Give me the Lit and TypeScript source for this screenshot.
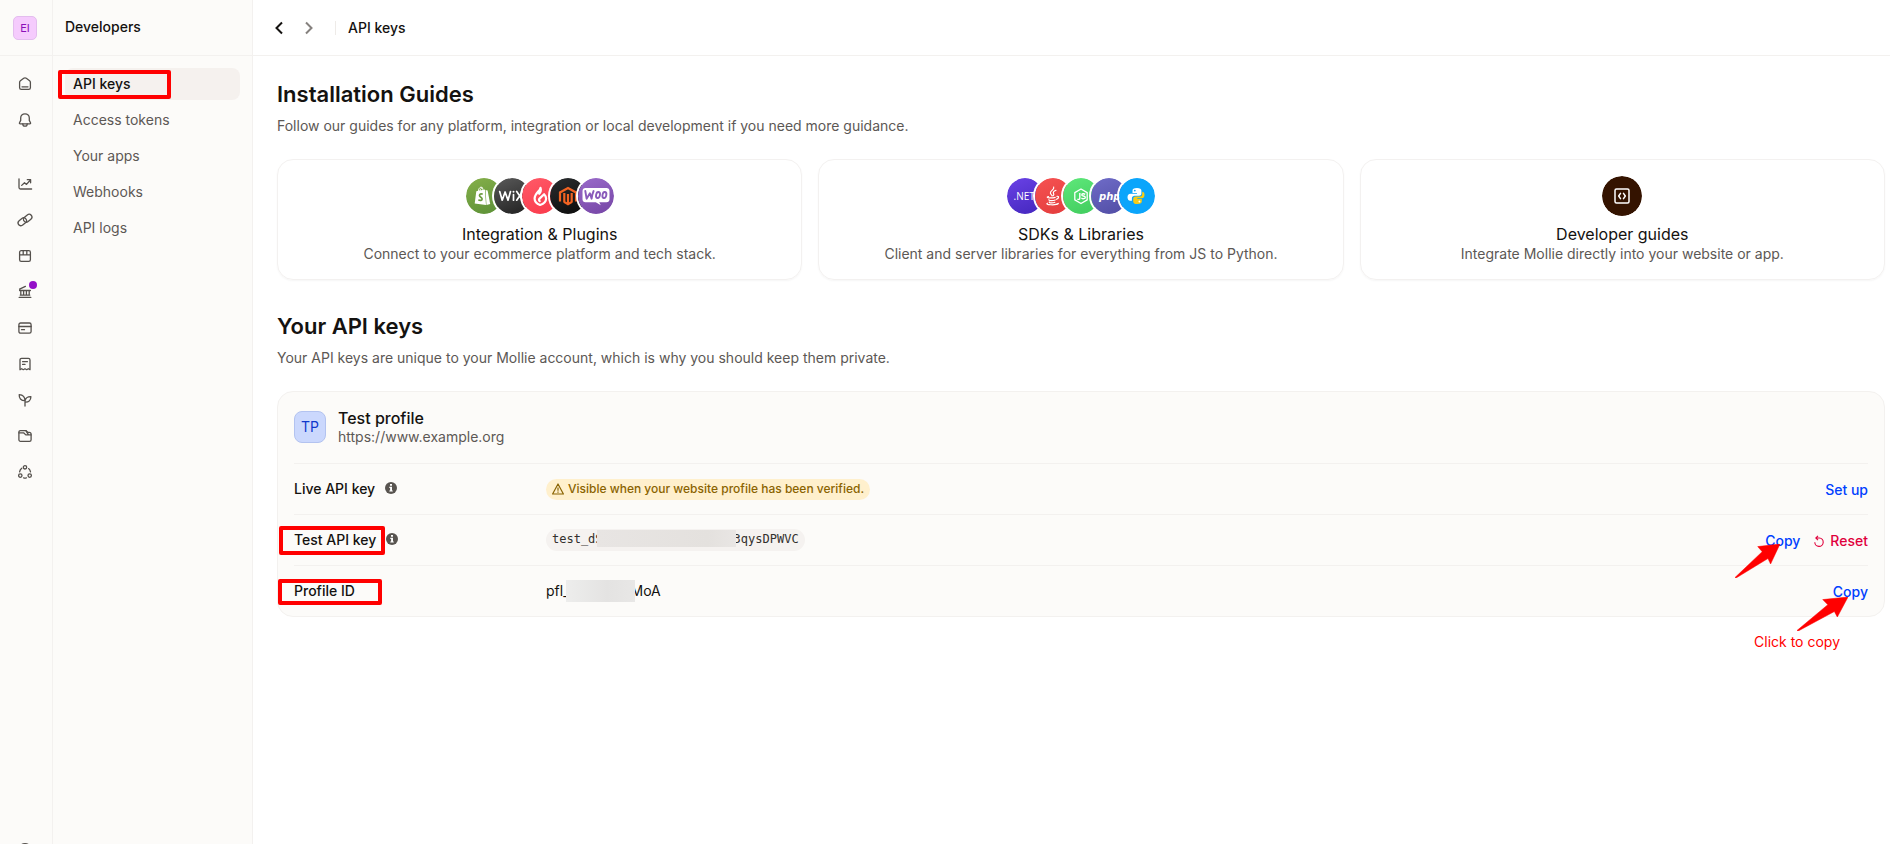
import { LitElement, html, svg, css, nothing, TemplateResult } from "lit";
import { customElement } from "lit/decorators.js";
import { classMap } from "lit/directives/class-map.js";

const railIcons: Record<string, TemplateResult> = {
  Home: svg`<path d="M8 1.9c-.5 0-.9.1-1.3.4L3.4 4.7c-.5.4-.8.9-.8 1.5v5.500c0 .9.7 1.700 1.700 1.700h7.400c1 0 1.700-.8 1.700-1.700V6.200c0-.6-.3-1.100-.8-1.500L9.300 2.300c-.4-.3-.8-.4-1.300-.4z"/><path d="M5 10.800h6"/>`,
  Notifications: svg`<path d="M8 1.800c-2.500 0-4.300 1.900-4.300 4.300v2.300L2.500 10.700c-.3.6 0 1.200.7 1.200h9.600c.7 0 1-.6.7-1.200l-1.200-2.300V6.100c0-2.400-1.800-4.300-4.300-4.300z"/><path d="M5.800 12c0 1.300 1 2.200 2.200 2.200s2.200-.9 2.200-2.200"/>`,
  Statistics: svg`<path d="M2 2.800v8.700c0 .9.600 1.500 1.500 1.500H14.600"/><path d="M4.700 9.400l2.800-2.700 2 1.700L13.400 4"/><path d="M10.300 3.700h3.300v3.100"/>`,
  "Payment links": svg`<rect x="0.700" y="7" width="9.200" height="5.600" rx="2.800" transform="rotate(-40 5.300 9.800)"/><rect x="6.100" y="3.400" width="9.200" height="5.600" rx="2.800" transform="rotate(-40 10.700 6.200)"/>`,
  Shop: svg`<rect x="2.600" y="2.700" width="10.800" height="10.700" rx="1.600"/><path d="M2.600 6.900h10.800M6.200 2.700v4.200M9.800 2.700v4.200"/>`,
  Balances: svg`<path d="M2.600 6.500h10.800M2.600 5.200L8.400 2.400M3.800 6.500v4.500M6.600 6.500v4.500M9.400 6.500v4.500M12.200 6.500v4.500M3.200 11.100h9.600M2.200 13.400h11.600"/>`,
  Cards: svg`<rect x="1.900" y="3" width="12.200" height="10.200" rx="1.700"/><path d="M1.900 6.500h12.200M4.500 9.700h3"/>`,
  Invoices: svg`<path d="M3 13.700V3.900c0-.9.700-1.600 1.600-1.600h6.800c.9 0 1.600.7 1.600 1.600v9.800l-1.700-1-1.600 1-1.700-1-1.700 1-1.600-1z"/><path d="M5.600 5.700h4.800M5.600 8.400h2.400"/>`,
  Capital: svg`<path d="M8 14V8.700M8 8.700C8 5.100 6 2.900 2.200 2.600c-.2 3.500 1.600 6.100 5.800 6.100zM8 10.200c3.900.2 5.800-1.900 5.900-5.500-3.200-.1-5.200 1.200-5.800 4"/>`,
  Wallet: svg`<path d="M1.900 11.700V4.200c0-.9.700-1.600 1.600-1.600h5.600l1.600 1.700h1.500c1.100 0 1.900.8 1.900 1.900v5.500c0 .9-.7 1.600-1.600 1.600h-9c-.9 0-1.600-.7-1.600-1.600z"/><path d="M1.900 4.800h4.700l2.200 2.100h5.200M9 2.800l2.400 3.900"/>`,
  Connect: svg`<circle cx="8" cy="3.300" r="1.700"/><circle cx="3.300" cy="11.600" r="1.700"/><circle cx="12.700" cy="11.600" r="1.700"/><path d="M4.700 4.300C3.500 5.200 2.800 6.500 2.600 7.900M11.600 4.600c1.100.9 1.700 2 1.900 3.300M6.600 13.800c.9.3 1.900.3 2.800 0"/>`,
  Settings: svg`<circle cx="8" cy="8" r="6.400"/><path d="M8 5v6"/>`,
};

const railGroups = [
  ["Home", "Notifications"],
  ["Statistics", "Payment links", "Shop", "Balances", "Cards", "Invoices", "Capital", "Wallet", "Connect"],
];

const menu = ["API keys", "Access tokens", "Your apps", "Webhooks", "API logs"];

const logo = (bg: string, body: TemplateResult) => html`
  <svg class="logo" viewBox="0 0 36 36" aria-hidden="true">
    <circle cx="18" cy="18" r="18" fill=${bg} />${body}
  </svg>`;

const gradient = (id: string, from: string, to: string) => svg`
  <defs><linearGradient id=${id} x1="0" y1="0" x2="0.400" y2="1">
    <stop offset="0" stop-color=${from}/><stop offset="1" stop-color=${to}/>
  </linearGradient></defs>`;

const plugins = [
  logo("url(#shop)", svg`${gradient("shop", "#86b04a", "#62953a")}
    <path fill="#fff" d="M10.300 13.200l8.600-1.700 1.100 15.600-11.300-1.700zM19.600 12l2 .6 2.600 13.400-3.700 1z"/>
    <path fill="none" stroke="#fff" stroke-width="1" d="M12.200 13.500c.3-2.600 1.600-4.300 2.800-4.400 1.400 0 2 1.600 2 3.600M14 13c.2-2 1.500-3.300 2.500-3.200"/>
    <path fill="none" stroke="#6b9b3e" stroke-width="1.700" d="M16.700 16.200c-1.600-.8-3.200-.2-3.200 1.200 0 1.900 2.600 1.700 2.600 3.500 0 1.600-1.900 1.900-3.700.8"/>`),
  logo("url(#wix)", svg`${gradient("wix", "#5a5a5a", "#2a2a2a")}
    <path fill="none" stroke="#fff" stroke-width="1.700" stroke-linejoin="round" stroke-linecap="round" d="M5.700 13.500l2.500 8.700 2.900-8.200 2.900 8.200 2.500-8.700M19.500 16.500v5.700M22.700 13.500l6 8.700M28.700 13.500l-6 8.700"/><circle cx="19.500" cy="13.700" r="1" fill="#fff"/>`),
  logo("url(#light)", svg`${gradient("light", "#ff5a68", "#fb3f50")}
    <path fill="none" stroke="#fff" stroke-width="2.200" stroke-linejoin="round" stroke-linecap="round" d="M18.500 9.800c-.4 3.200-5.900 5.800-5.900 10.600 0 3.400 2.500 5.500 5.500 6.600 3.200-1 6-3.100 6-6.400 0-1.900-.8-3.200-2-4.400l-4.300 4.200c-1 1-1 1.900-.1 2.800M18.500 9.800c.9 2.800.2 4.400-1.300 6"/>`),
  logo("url(#magento)", svg`${gradient("magento", "#2a2d2f", "#111")}
    <path fill="none" stroke="#f26322" stroke-width="2.200" d="M10 23.500V14.500l8-4.500 8 4.500v9M14.300 15v9.300M21.700 15v9.300M14 23.900l4 2.400 4-2.400M18 16v10"/>`),
  logo("url(#woo)", svg`${gradient("woo", "#9a6bca", "#7b4bab")}
    <path fill="#fff" d="M7.500 10h21c1.800 0 3 1.200 3 3v8.300c0 1.800-1.200 3-3 3h-7.300l1.600 3-5-3H7.500c-1.800 0-3-1.200-3-3V13c0-1.800 1.200-3 3-3z"/>
    <path fill="none" stroke="#8a5bbb" stroke-width="1.900" stroke-linejoin="round" stroke-linecap="round" d="M7.300 13l1.300 7.700 3.300-5.500 1.700 5.500c.3-3 1-5.500 2-7.700"/>
    <ellipse cx="20" cy="17" rx="1.900" ry="3.100" transform="rotate(12 20 17)" fill="none" stroke="#8a5bbb" stroke-width="1.900"/><ellipse cx="26.400" cy="17" rx="1.900" ry="3.100" transform="rotate(12 26.400 17)" fill="none" stroke="#8a5bbb" stroke-width="1.900"/>`),
];

const sdks = [
  logo("url(#net)", svg`${gradient("net", "#6a42e6", "#4a2bc4")}<text class="net" x="6.500" y="22">.NET</text>`),
  logo("url(#java)", svg`${gradient("java", "#f65252", "#e64040")}
    <path fill="none" stroke="#fff" stroke-width="1.200" stroke-linecap="round" d="M18.700 9c1 2.800-3.900 3.800-3.300 6.200.2 1 1.500 1.700 1.800 2.800M21 12.300c-2.300.9-3.200 1.900-2.400 3.200.5.800.3 1.400-.3 2M13.500 18.500c-2.200.6-1.200 1.300 1 1.400 2 .1 4.200-.1 5.700-.5M22 18.300c2.200-.3 2 2-.6 3M14 21.700c-.8 1 3.800 1.300 6.200.3M14.300 24c-.5 1 3.600 1.200 5.500.3M12.500 25.200c-3.600 1.500 8.500 2.500 10.800.3"/>`),
  logo("url(#node)", svg`${gradient("node", "#5ee87a", "#45d062")}
    <path fill="none" stroke="#fff" stroke-width="1.300" stroke-linejoin="round" d="M18 11l6.200 3.600v7.300L18 25.500l-6.200-3.600v-7.300z"/>
    <path fill="none" stroke="#fff" stroke-width="1.400" d="M16.800 15v5.200c0 1.300-1.300 1.500-2.400.8M22.200 16.300c-1.400-.9-3.400-.6-3.400.6 0 1.500 3.500.7 3.500 2.500 0 1.500-2.500 1.700-3.900.6"/>`),
  logo("url(#php)", svg`${gradient("php", "#6f6cc8", "#5652aa")}<text class="php" x="8" y="21.500">php</text>`),
  logo("#0ba5fb", svg`
    <path fill="#fff" d="M18 10c-3.300 0-4.500 1-4.500 2.500V15H18v.8h-6.500c-2 0-3 1.500-3 3.400s1 3.500 2.700 3.500h1.700v-2.200c0-1.700 1.300-2.700 2.800-2.700h4.400c1.300 0 2.300-1 2.300-2.300v-3C22.400 11 21 10 18 10z"/>
    <path fill="#f9cb14" d="M18.300 26c3.300 0 4.500-1 4.500-2.500V21h-4.500v-.8h4.500c2 0 2.700-1.500 2.700-3.400s-.9-3-2.300-3v2.100c0 1.700-1.200 2.700-2.700 2.700h-4c-1.300 0-2.300 1-2.300 2.300v2.500c0 1.600 1.400 2.600 4.100 2.600z"/>
    <circle cx="15.800" cy="12.600" r="0.900" fill="#0ba5fb"/><circle cx="20.400" cy="23.500" r="0.900" fill="#fff"/>`),
];

const devGuide = html`
  <svg class="logo large" viewBox="0 0 40 40" aria-hidden="true">
    <circle cx="20" cy="20" r="20" fill="#341300" />
    <g fill="none" stroke="#fff" stroke-width="1.500" stroke-linecap="round" stroke-linejoin="round">
      <rect x="13" y="13" width="14" height="14" rx="1.500" /><path d="M18.500 17.300l-1.800 2.700 1.800 2.700M21.500 17.300l1.800 2.700-1.800 2.700" />
    </g>
  </svg>`;

const guides = [
  { title: "Integration & Plugins", text: "Connect to your ecommerce platform and tech stack.", logos: plugins },
  { title: "SDKs & Libraries", text: "Client and server libraries for everything from JS to Python.", logos: sdks },
  { title: "Developer guides", text: "Integrate Mollie directly into your website or app.", logos: [devGuide] },
];

const infoIcon = html`
  <button class="info" aria-label="More information">
    <svg viewBox="0 0 12 12" aria-hidden="true"><circle cx="6" cy="6" r="6" fill="#585450" />
      <path d="M5 2.100h2v1.600H5zM4.300 4.800H7v3.600h.8v1.200H4.300V8.400h.8V6h-.8z" fill="#fff" /></svg>
  </button>`;

const arrow = html`
  <svg class="arrow" viewBox="0 0 43 34" preserveAspectRatio="none" aria-hidden="true">
    <path d="M0 33.500L26 7.700 21.700 2.600 43 0 34 20 31.500 14.500 1 34z" fill="#f00" stroke="#f00" stroke-width="0.500" />
  </svg>`;

@customElement("app-root")
export class AppRoot extends LitElement {
  static styles = css`
    :host {
      display: grid;
      grid-template-columns: 53px 200px minmax(0, 1fr);
      min-height: 100vh;
      box-sizing: border-box;
      background: #fff;
      color: #141210;
      font: 400 14px/20px Inter, sans-serif;
    }
    * { box-sizing: border-box; }
    h1, h2, h3, p, ul, dl, dd, dt { margin: 0; padding: 0; font: inherit; }
    ul { list-style: none; }
    a { color: inherit; text-decoration: none; }
    button { font: inherit; color: inherit; background: none; border: 0; padding: 0; cursor: pointer; }
    svg { display: block; }

    .rail, .side { background: #fcfbf9; border-right: 1px solid #f3f1ef; }
    .rail { display: flex; flex-direction: column; height: 100vh; overflow: hidden; }
    .bar { display: flex; align-items: center; height: 56px; border-bottom: 1px solid #f3f1ef; flex: none; }
    .rail .bar { padding: 1px 0 0 13px; }
    .account {
      width: 24px; height: 24px; border-radius: 5px; border: 1px solid #e3bdee;
      background: #f5cbfd; color: #8c0fb8; font-size: 11px; line-height: 22px;
    }
    .icons { display: flex; flex-direction: column; padding: 10px 0 28px 13px; }
    .icons + .icons { padding-top: 0; }
    .icons.foot { margin: auto 0 -24px; padding: 0 0 0 13px; }
    .icons a { position: relative; display: grid; place-items: center; width: 24px; height: 36px; }
    .icons svg {
      width: 16px; height: 16px; fill: none; stroke: #55514d; stroke-width: 1.3;
      stroke-linecap: round; stroke-linejoin: round;
    }
    .dot { position: absolute; top: 7px; right: 0; width: 8px; height: 8px; border-radius: 50%; background: #9410c8; }

    .side .bar { padding: 0 12px 2px; font-weight: 500; }
    .menu { display: flex; flex-direction: column; gap: 4px; padding: 12px; }
    .menu a { display: block; padding: 6px 8px; border-radius: 8px; color: #5c5855; }
    .menu .current { position: relative; background: #f5f1ee; color: #141210; font-weight: 500; }

    .crumbs { gap: 14px; padding-left: 18px; font-weight: 500; }
    .crumbs button { display: grid; place-items: center; width: 16px; height: 16px; }
    .crumbs svg { width: 12px; height: 14px; fill: none; stroke: #141210; stroke-width: 2; }
    .crumbs button:disabled svg { stroke: #85817e; }
    .trail { margin-left: 4px; padding-left: 12px; border-left: 1px solid #eeebe8; line-height: 14px; }

    .content { padding: 22px 5px 40px 24px; }
    h2 { font-size: 22px; line-height: 32px; font-weight: 600; }
    .lead { margin: 6px 0 23px; color: #5c5855; }
    .guides { display: grid; grid-template-columns: repeat(3, minmax(0, 1fr)); gap: 16px; margin-bottom: 30px; }
    .guide {
      display: flex; flex-direction: column; align-items: center; padding: 16px 16px 15px;
      border: 1px solid #f3f1f0; border-radius: 16px; text-align: center; box-shadow: 0 1px 2px #0000000a;
    }
    .logos { display: flex; align-items: center; height: 40px; margin-bottom: 8px; }
    .logo { width: 36px; height: 36px; border-radius: 50%; }
    .logo + .logo { margin-left: -8px; box-shadow: 0 0 0 2px #fff; }
    .logo.large { width: 40px; height: 40px; }
    .net { font: 400 10px "Open Sans", sans-serif; fill: #fff; }
    .php { font: italic 700 10px "DejaVu Sans", sans-serif; fill: #fff; }
    .guide h3 { font-size: 16px; line-height: 20px; }
    .guide p { color: #5c5855; }

    .profile { padding: 0 16px; background: #fcfbf9; border: 1px solid #f3f1ef; border-radius: 16px; }
    .who { display: flex; align-items: center; gap: 12px; height: 71px; padding-bottom: 1px; }
    .badge {
      width: 32px; height: 32px; border-radius: 8px; border: 1px solid #b3c3f0; background: #cbd8fd;
      color: #0f38cc; text-align: center; line-height: 30px;
    }
    .who h3 { font-size: 16px; line-height: 20px; font-weight: 500; }
    .who p { color: #5c5855; line-height: 18px; }
    .row {
      display: grid; grid-template-columns: 252px minmax(0, 1fr) auto; align-items: center;
      height: 51px; border-top: 1px solid #f3f1ef;
    }
    dt { display: flex; align-items: center; gap: 10px; font-weight: 500; }
    .info { padding-bottom: 2px; }
    .info svg { width: 12px; height: 12px; }
    .warn {
      display: inline-flex; align-items: center; gap: 4px; padding: 0 6px; height: 21px; border-radius: 11px;
      background: #fff0cd; color: #8a6300; font-size: 12px; font-weight: 500; vertical-align: top;
    }
    .warn svg { width: 12px; height: 12px; fill: none; stroke: #8a6300; stroke-width: 1.2; stroke-linejoin: round; }
    .secret {
      display: inline-flex; padding: 0 6px; height: 22px; line-height: 21px; border-radius: 11px; background: #f5f2f0;
      color: #33302d; font-family: "DejaVu Sans Mono", monospace; font-size: 12px; vertical-align: top;
    }
    .mask {
      position: relative; width: 139px; height: 17px; margin: 1px -2px 0 -6px;
      background: linear-gradient(90deg, #e8e5e3, #e4e1de 80%, #e9e6e4);
    }
    .id { display: flex; align-items: center; }
    .id .mask { width: 69px; height: 22px; margin: 0 -4px; background: linear-gradient(90deg, #ededec, #e4e3e2 60%, #e8e7e6); }
    .actions { display: flex; gap: 14px; color: #0040ff; font-weight: 500; padding-top: 2px; }
    .actions button { position: relative; display: flex; align-items: center; gap: 6px; }
    .actions .reset { color: #e0003c; }
    .reset svg { width: 10px; height: 12px; fill: none; stroke: #e0003c; stroke-width: 1.1; }

    .marked { position: relative; }
    .marked::after, .current::after { content: ""; position: absolute; border: 4px solid #f00; border-radius: 2px; pointer-events: none; }
    .current::after { inset: 2px 69px 1px -7px; }
    .marked::after { inset: -4px -9px -5px -15px; }
    .marked.wide::after { inset: -2px -27px -4px -16px; }
    .arrow { position: absolute; right: 20px; top: 13px; width: 45px; height: 34px; pointer-events: none; }
    .lower .arrow { width: 51px; top: 15px; }
    .note {
      position: absolute; right: 28px; top: 50px; white-space: nowrap; color: #f00;
      font-weight: 400; pointer-events: none;
    }
  `;

  private railLink(name: string) {
    return html`<a href="#" aria-label=${name}>
      <svg viewBox="0 0 16 16" aria-hidden="true">${railIcons[name]}</svg>
      ${name === "Balances" ? html`<span class="dot"></span>` : nothing}
    </a>`;
  }

  render() {
    return html`
      <nav class="rail" aria-label="Main">
        <div class="bar"><button class="account">EI</button></div>
        ${railGroups.map((group) => html`<div class="icons">${group.map((n) => this.railLink(n))}</div>`)}
        <div class="icons foot">${this.railLink("Settings")}</div>
      </nav>

      <nav class="side" aria-label="Developers">
        <div class="bar">Developers</div>
        <ul class="menu">
          ${menu.map((m, i) => html`<li><a href="#" class=${classMap({ current: i === 0 })}>${m}</a></li>`)}
        </ul>
      </nav>

      <main>
        <div class="bar crumbs">
          <button aria-label="Back"><svg viewBox="0 0 12 14"><path d="M9 1.500L3.500 7 9 12.500" /></svg></button>
          <button aria-label="Forward" disabled><svg viewBox="0 0 12 14"><path d="M3 1.500L8.500 7 3 12.500" /></svg></button>
          <h1 class="trail">API keys</h1>
        </div>

        <div class="content">
          <h2>Installation Guides</h2>
          <p class="lead">Follow our guides for any platform, integration or local development if you need more guidance.</p>
          <div class="guides">
            ${guides.map((g) => html`<a class="guide" href="#">
              <div class="logos">${g.logos}</div>
              <h3>${g.title}</h3>
              <p>${g.text}</p>
            </a>`)}
          </div>

          <h2>Your API keys</h2>
          <p class="lead">Your API keys are unique to your Mollie account, which is why you should keep them private.</p>
          <section class="profile">
            <div class="who">
              <div class="badge">TP</div>
              <div><h3>Test profile</h3><p>https://www.example.org</p></div>
            </div>
            <dl>
              <div class="row">
                <dt>Live API key ${infoIcon}</dt>
                <dd><span class="warn">
                  <svg viewBox="0 0 12 12" aria-hidden="true"><path d="M6 1L11.400 11H.6zM6 4.500v3.200M6 8.600v1.200" /></svg>
                  Visible when your website profile has been verified.</span></dd>
                <dd class="actions"><button>Set up</button></dd>
              </div>
              <div class="row">
                <dt><span class="marked">Test API key</span> ${infoIcon}</dt>
                <dd><span class="secret"><span>test_dS</span><span class="mask"></span><span>3qysDPWVC</span></span></dd>
                <dd class="actions">
                  <button>Copy${arrow}</button>
                  <button class="reset"><svg viewBox="0 0 10 12" aria-hidden="true"><path d="M2.200 3H5.400a4.200 4.200 0 1 1-4.600 4.200M4 .8L1.800 3 4 5.200" /></svg>Reset</button>
                </dd>
              </div>
              <div class="row">
                <dt><span class="marked wide">Profile ID</span></dt>
                <dd class="id"><span>pfl_</span><span class="mask"></span><span>MoA</span></dd>
                <dd class="actions"><button class="lower">Copy${arrow}<span class="note">Click to copy</span></button></dd>
              </div>
            </dl>
          </section>
        </div>
      </main>
    `;
  }
}
